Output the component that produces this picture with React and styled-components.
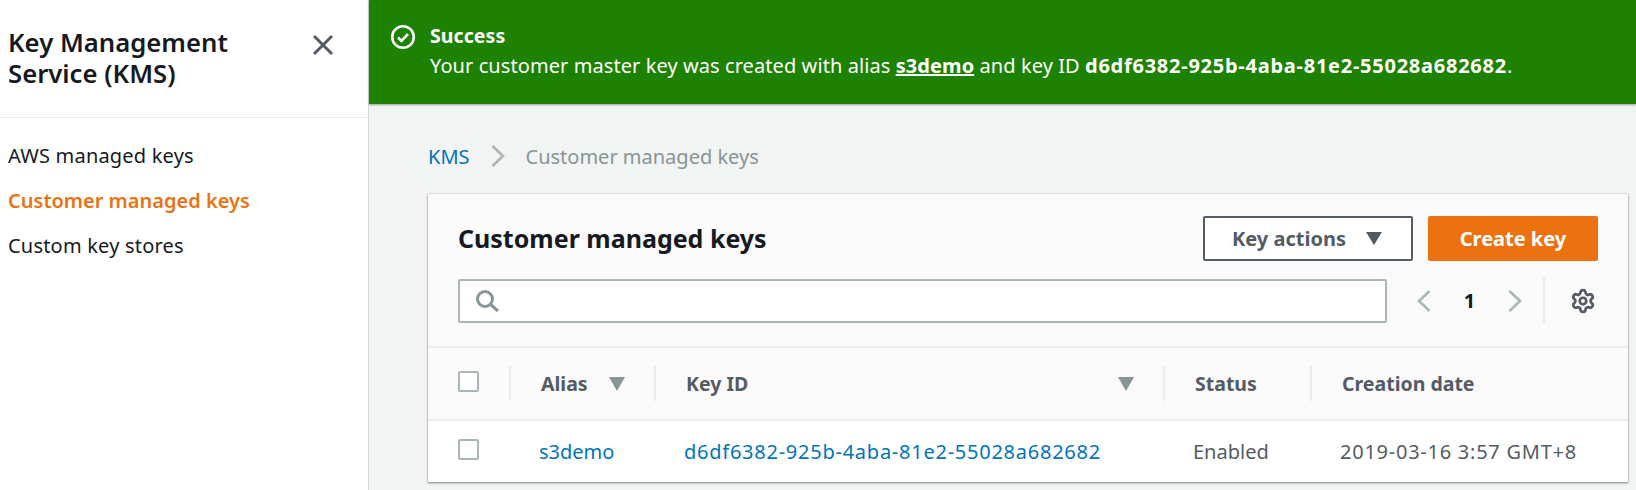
import styled, { createGlobalStyle } from 'styled-components';
import { Settings } from 'lucide-react';

const GlobalStyle = createGlobalStyle`
  html, body { margin: 0; padding: 0; }
  body {
    background: #f2f3f3;
    font-family: "Noto Sans", "Open Sans", sans-serif;
    color: #16191f;
    overflow: hidden;
  }
  * { box-sizing: border-box; }
`;

const Page = styled.div`
  display: flex;
  width: 1636px;
  height: 490px;
  overflow: hidden;
`;

const Sidebar = styled.aside`
  width: 369px;
  flex-shrink: 0;
  background: #fff;
  border-right: 1px solid #d5dbdb;
`;

const SideHeader = styled.div`
  display: flex;
  justify-content: space-between;
  height: 118px;
  padding: 27px 33px 0 8px;
  border-bottom: 1px solid #eaeded;
`;

const SideTitle = styled.h1`
  margin: 0;
  width: 270px;
  font-size: 25.7px;
  line-height: 31px;
  font-weight: 600;
`;

const CloseButton = styled.svg`
  width: 24px;
  height: 24px;
  margin-top: 6px;
`;

const SideNav = styled.nav`
  display: flex;
  flex-direction: column;
  gap: 15px;
  padding: 23px 8px;
`;

const NavItem = styled.a`
  font-size: 20px;
  line-height: 30px;
  font-weight: ${(p) => (p.$active ? 600 : 400)};
  letter-spacing: ${(p) => (p.$active ? 0 : 0.2)}px;
  color: ${(p) => (p.$active ? '#ec7211' : '#16191f')};
`;

const Main = styled.main`
  flex: 1;
  min-width: 0;
`;

const Banner = styled.div`
  display: flex;
  gap: 14px;
  height: 104px;
  padding: 21px 0 0 21px;
  background: #1d8102;
  color: #fff;
  box-shadow: 0 1px 2px rgba(0, 28, 36, 0.4);
`;

const BannerIcon = styled.svg`
  width: 26px;
  height: 26px;
  margin-top: 3px;
  flex-shrink: 0;
`;

const BannerText = styled.div`
  font-size: 20px;
  line-height: 30px;
  letter-spacing: 0.08px;
`;

const BannerTitle = styled.div`
  font-weight: 700;
  font-size: 19.5px;
`;

const BannerLink = styled.a`
  font-weight: 700;
  text-decoration: underline;
`;

const KeyId = styled.strong`
  letter-spacing: 0.75px;
`;

const Content = styled.div`
  padding: 36px 8px 0 59px;
`;

const Breadcrumb = styled.div`
  display: flex;
  align-items: center;
  gap: 21px;
  height: 32px;
  font-size: 20px;
`;

const CrumbLink = styled.a`
  color: #0073bb;
`;

const CrumbCurrent = styled.span`
  color: #879596;
`;

const Card = styled.section`
  margin-top: 22px;
  background: #fff;
  box-shadow: 0 1px 2px rgba(0, 28, 36, 0.5), 0 0 1px rgba(0, 28, 36, 0.3);
`;

const CardHeader = styled.div`
  background: #fafafa;
  border-bottom: 2px solid #eaeded;
  padding: 22px 30px 0;
  height: 154px;
`;

const TitleRow = styled.div`
  display: flex;
  align-items: center;
  justify-content: space-between;
  height: 45px;
`;

const CardTitle = styled.h2`
  margin: 0 0 2px;
  font-size: 25px;
  font-weight: 700;
`;

const Actions = styled.div`
  display: flex;
  gap: 15px;
`;

const OutlineButton = styled.button`
  display: flex;
  align-items: center;
  justify-content: center;
  gap: 20px;
  width: 210px;
  height: 45px;
  padding-left: 4px;
  background: #fff;
  border: 2px solid #545b64;
  border-radius: 2px;
  color: #545b64;
  font: 700 20px "Noto Sans", sans-serif;
`;

const PrimaryButton = styled.button`
  width: 170px;
  height: 45px;
  background: #ec7211;
  border: none;
  border-radius: 2px;
  color: #fff;
  font: 700 20px "Noto Sans", sans-serif;
`;

const FilterRow = styled.div`
  display: flex;
  align-items: center;
  margin-top: 16px;
`;

const SearchBox = styled.div`
  display: flex;
  align-items: center;
  width: 929px;
  height: 44px;
  padding-left: 15px;
  background: #fff;
  border: 2px solid #aab7b8;
  border-radius: 2px;
`;

const Pager = styled.div`
  display: flex;
  align-items: center;
  width: 158px;
  height: 47px;
  padding-left: 30px;
  border-right: 2px solid #eaeded;
`;

const PageNumber = styled.span`
  width: 77px;
  text-align: center;
  font-size: 20px;
  font-weight: 700;
`;

const GearWrap = styled.div`
  margin-left: 25px;
  display: flex;
  color: #545b64;
`;

const Row = styled.div`
  display: grid;
  grid-template-columns: 81px 145px 509px 147px 1fr;
  align-items: center;
`;

const HeadRow = styled(Row)`
  height: 73px;
  background: #fafafa;
  border-bottom: 2px solid #eaeded;
`;

const BodyRow = styled(Row)`
  height: 61px;
  background: #fff;
`;

const HeadCell = styled.div`
  display: flex;
  align-items: center;
  justify-content: space-between;
  height: 35px;
  padding: 0 29px 0 30px;
  font-size: 19.5px;
  font-weight: 700;
  color: #545b64;
  border-left: 2px solid #eaeded;
`;

const CheckCell = styled.div`
  display: flex;
  padding-left: 30px;
  margin-bottom: 4px;
`;

const Checkbox = styled.span`
  display: block;
  width: 21px;
  height: 21px;
  background: #fff;
  border: 2px solid #aab7b8;
  border-radius: 2px;
`;

const BodyCell = styled.div`
  padding-left: 30px;
  font-size: 20px;
  white-space: nowrap;
  color: #545b64;
  letter-spacing: ${(p) => (p.$wide ? 0.75 : 0)}px;
`;

const CellLink = styled.a`
  color: #0073bb;
`;

const SortArrow = () => (
  <svg width="16" height="14" viewBox="0 0 16 14">
    <path d="M0 0h16L8 14z" fill="#879596" />
  </svg>
);

const Chevron = ({ dir }) => (
  <svg width="14" height="22" viewBox="0 0 14 22" fill="none" stroke="#aab7b8" strokeWidth="2.6">
    <path d={dir === 'left' ? 'M12.5 1 2 11l10.5 10' : 'M1.5 1 12 11 1.5 21'} />
  </svg>
);

export default function App() {
  return (
    <Page>
      <GlobalStyle />
      <Sidebar>
        <SideHeader>
          <SideTitle>Key Management Service (KMS)</SideTitle>
          <CloseButton viewBox="0 0 24 24" fill="none" stroke="#545b64" strokeWidth="3">
            <path d="M3 3l18 18M21 3L3 21" />
          </CloseButton>
        </SideHeader>
        <SideNav>
          <NavItem>AWS managed keys</NavItem>
          <NavItem $active>Customer managed keys</NavItem>
          <NavItem>Custom key stores</NavItem>
        </SideNav>
      </Sidebar>
      <Main>
        <Banner>
          <BannerIcon viewBox="0 0 26 26" fill="none" stroke="#fff">
            <circle cx="13" cy="13" r="10.8" strokeWidth="2.6" />
            <path d="M8 13.5l3.5 3.5L18 10" strokeWidth="2.6" />
          </BannerIcon>
          <BannerText>
            <BannerTitle>Success</BannerTitle>
            Your customer master key was created with alias <BannerLink>s3demo</BannerLink> and key ID{' '}
            <KeyId>d6df6382-925b-4aba-81e2-55028a682682</KeyId>.
          </BannerText>
        </Banner>
        <Content>
          <Breadcrumb>
            <CrumbLink>KMS</CrumbLink>
            <Chevron dir="right" />
            <CrumbCurrent>Customer managed keys</CrumbCurrent>
          </Breadcrumb>
          <Card>
            <CardHeader>
              <TitleRow>
                <CardTitle>Customer managed keys</CardTitle>
                <Actions>
                  <OutlineButton>
                    Key actions
                    <svg width="16" height="13" viewBox="0 0 16 13">
                      <path d="M0 0h16L8 13z" fill="#545b64" />
                    </svg>
                  </OutlineButton>
                  <PrimaryButton>Create key</PrimaryButton>
                </Actions>
              </TitleRow>
              <FilterRow>
                <SearchBox>
                  <svg width="24" height="24" viewBox="0 0 24 24" fill="none" stroke="#879596" strokeWidth="3">
                    <circle cx="10" cy="10" r="7.5" />
                    <path d="M15.5 15.5L23 22" />
                  </svg>
                </SearchBox>
                <Pager>
                  <Chevron dir="left" />
                  <PageNumber>1</PageNumber>
                  <Chevron dir="right" />
                </Pager>
                <GearWrap>
                  <Settings size={26} strokeWidth={2.5} />
                </GearWrap>
              </FilterRow>
            </CardHeader>
            <HeadRow>
              <CheckCell>
                <Checkbox />
              </CheckCell>
              <HeadCell>
                Alias
                <SortArrow />
              </HeadCell>
              <HeadCell>
                Key ID
                <SortArrow />
              </HeadCell>
              <HeadCell>Status</HeadCell>
              <HeadCell>Creation date</HeadCell>
            </HeadRow>
            <BodyRow>
              <CheckCell>
                <Checkbox />
              </CheckCell>
              <BodyCell>
                <CellLink>s3demo</CellLink>
              </BodyCell>
              <BodyCell $wide>
                <CellLink>d6df6382-925b-4aba-81e2-55028a682682</CellLink>
              </BodyCell>
              <BodyCell>Enabled</BodyCell>
              <BodyCell $wide>2019-03-16 3:57 GMT+8</BodyCell>
            </BodyRow>
          </Card>
        </Content>
      </Main>
    </Page>
  );
}
